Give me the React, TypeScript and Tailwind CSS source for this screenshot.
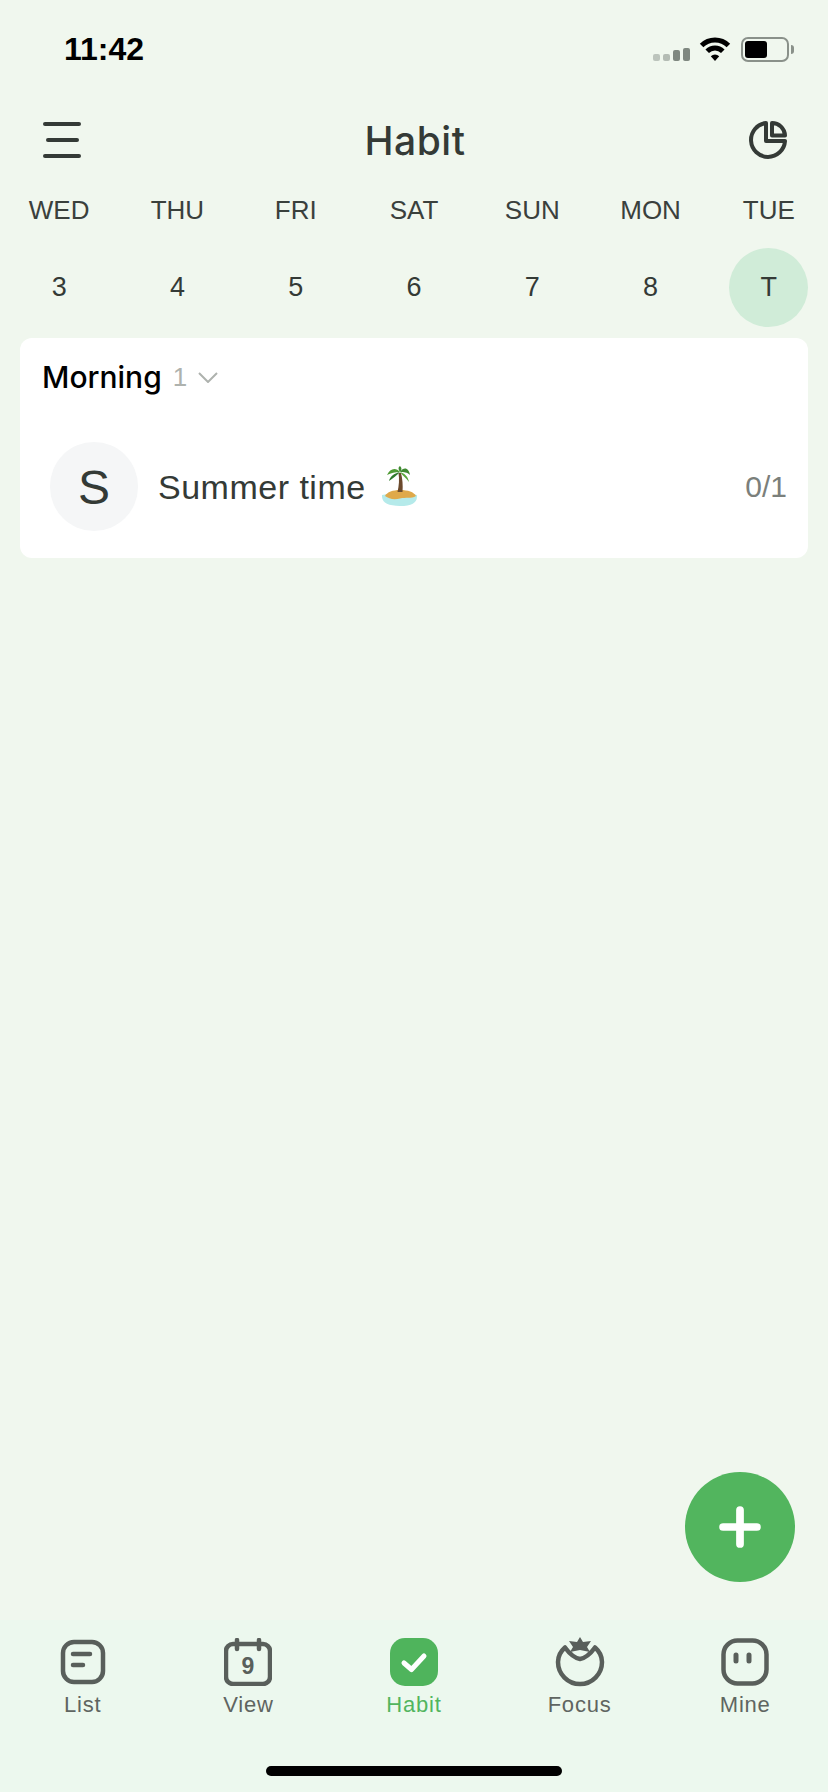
import { Plus } from "lucide-react";

const days = [
  { name: "WED", num: "3" },
  { name: "THU", num: "4" },
  { name: "FRI", num: "5" },
  { name: "SAT", num: "6" },
  { name: "SUN", num: "7" },
  { name: "MON", num: "8" },
  { name: "TUE", num: "T", today: true }
];

function StatusIcons() {
  return <div className="flex items-center">
      <div className="flex items-end gap-[3px] w-[37px] mt-[8px]">
        <span className="w-[7px] h-[7px] rounded-[2px] bg-[#bcc4bc]" />
        <span className="w-[7px] h-[7px] rounded-[2px] bg-[#b4bcb4]" />
        <span className="w-[7px] h-[11px] rounded-[2px] bg-[#7f8880]" />
        <span className="w-[7px] h-[13px] rounded-[2px] bg-[#7f8880]" />
      </div>
      <svg width="32" height="24" viewBox="0 0 32 24" fill="none" className="ml-[9px] mb-[2px]">
        <path d="M2.600 8.600 A19 19 0 0 1 29.400 8.600" stroke="#000" strokeWidth="5" />
        <path d="M8.200 14.200 A11 11 0 0 1 23.800 14.200" stroke="#000" strokeWidth="5" />
        <path d="M11.800 19.300 L16 24 L20.200 19.300 A6 6 0 0 0 11.800 19.300 Z" fill="#000" />
      </svg>
      <div className="ml-[10px] mb-[1px] flex items-center">
        <div className="w-[48px] h-[25px] rounded-[7px] border-2 border-[#8a918a] p-[2px]">
          <div className="w-[22px] h-full rounded-[3px] bg-black" />
        </div>
        <span className="ml-[2px] w-[3px] h-[9px] rounded-r-full bg-[#8a918a]" />
      </div>
    </div>;
}

function PalmIsland() {
  return <svg width="36" height="40" viewBox="0 0 36 40" className="shrink-0">
      <path d="M0 29 Q18 25 35 29 Q36 40 18 40 Q-1 40 0 29 Z" fill="#b5eaea" />
      <path d="M3 30 C5 26 11 24 18 24 C26 24 32 26 34 30 C29 33 24 31 18 32.500 C12 34 7 33 3 30 Z" fill="#dfa94a" />
      <path d="M16.500 7 C17.500 13 17 20 15.500 26 L20.500 26 C21 19 20.500 13 19 7 Z" fill="#6b4a2c" />
      <path d="M18 6 C14 1 8 2 5 9 C9 7 13 6 18 6 Z" fill="#4f9a34" />
      <path d="M18 6 C22 0 27 2 28 9 C25 6 22 6 18 6 Z" fill="#3f8a30" />
      <path d="M18 6 C13 7 8 10 7 15 C11 12 14 10 18 6 Z" fill="#2f7a2c" />
      <path d="M18 6 C22 7 26 10 27 16 C24 12 21 10 18 6 Z" fill="#5aa83c" />
      <path d="M18 6 C16 3 16 1 18 0 C20 2 20 4 18 6 Z" fill="#3f8a30" />
    </svg>;
}

function ListIcon() {
  return <svg width="48" height="48" viewBox="0 0 48 48" fill="none" stroke="#595f5b">
      <rect x="4" y="4" width="40" height="40" rx="11" strokeWidth="4.5" />
      <path d="M14 16 H31 M14 27 H24" strokeWidth="4.5" strokeLinecap="round" />
    </svg>;
}

function ViewIcon() {
  return <svg width="48" height="48" viewBox="0 0 48 48" fill="none" stroke="#595f5b">
      <rect x="2" y="6" width="44" height="40" rx="7" strokeWidth="4.5" />
      <path d="M13 2 V11 M35 2 V11" strokeWidth="4.5" strokeLinecap="round" />
      <text x="24" y="36" textAnchor="middle" fontSize="23" fontWeight="700" fontFamily="Liberation Sans, sans-serif" fill="#595f5b" stroke="none">9</text>
    </svg>;
}

function HabitIcon() {
  return <div className="w-[48px] h-[48px] rounded-[15px] bg-[#4fb45c] flex items-center justify-center">
      <svg width="48" height="48" viewBox="0 0 48 48" fill="none">
        <path d="M14 25 L21.500 31.500 L34 18" stroke="#fff" strokeWidth="5" strokeLinecap="round" strokeLinejoin="round" />
      </svg>
    </div>;
}

function FocusIcon() {
  return <svg width="48" height="48" viewBox="0 0 48 48" fill="none" className="overflow-visible">
      <path d="M9 9.500 C13 15 18 20 24 21 C30 20 35 15 39 9.500 C43 13 46 18 46 24 A22 22 0 0 1 2 24 C2 18 5 13 9 9.500 Z" stroke="#595f5b" strokeWidth="4.5" strokeLinejoin="round" />
      <path d="M24 -1 L27 4 L35 3 L31 9 L34 14 L24 12 L14 14 L17 9 L13 3 L21 4 Z" fill="#595f5b" />
    </svg>;
}

function MineIcon() {
  return <svg width="48" height="48" viewBox="0 0 48 48" fill="none" stroke="#595f5b">
      <rect x="2.500" y="2.500" width="43" height="43" rx="14" strokeWidth="4.5" />
      <path d="M15 17 V23 M28 17 V23" strokeWidth="5" strokeLinecap="round" />
    </svg>;
}

const tabs = [
  { label: "List", icon: <ListIcon /> },
  { label: "View", icon: <ViewIcon /> },
  { label: "Habit", icon: <HabitIcon />, active: true },
  { label: "Focus", icon: <FocusIcon /> },
  { label: "Mine", icon: <MineIcon /> }
];

export default function App() {
  return <div className="relative w-[828px] h-[1792px] flex flex-col overflow-hidden bg-[#f0f7ee] font-['Liberation_Sans',sans-serif]">
      <div className="h-[100px] flex items-center justify-between pl-[64px] pr-[34px]">
        <span className="text-[32px] leading-none font-bold text-black mb-[2px]">11:42</span>
        <StatusIcons />
      </div>

      <div className="h-[80px] flex items-center justify-between pl-[43px] pr-[41px]">
        <div className="w-[38px] h-[36px] flex flex-col justify-between items-center">
          <span className="h-[4px] w-[38px] rounded-full bg-[#343a36]" />
          <span className="h-[4px] w-[33px] rounded-full bg-[#343a36]" />
          <span className="h-[4px] w-[38px] rounded-full bg-[#343a36]" />
        </div>
        <span className="text-[39px] leading-none font-medium tracking-[0.5px] text-[#343a36] font-['Inter',sans-serif]">Habit</span>
        <svg width="38" height="38" viewBox="0 0 38 38" fill="none" stroke="#343a36" strokeWidth="4" strokeLinejoin="round">
          <path d="M17 2 A17 17 0 1 0 36 20 H17 Z" />
          <path d="M23 2 A13 13 0 0 1 36 14.500 H23 Z" />
        </svg>
      </div>

      <div className="grid grid-cols-7 h-[60px] items-center text-center text-[26px] leading-none text-[#3a403c]">
        {days.map(d => <span key={d.name}>{d.name}</span>)}
      </div>

      <div className="grid grid-cols-7 mt-[8px] text-[27px] leading-none text-[#343a36]">
        {days.map(d => <div key={d.name} className="flex justify-center">
            <span className={d.today ? "w-[79px] h-[79px] rounded-full bg-[#d0ecd8] flex items-center justify-center" : "w-[79px] h-[79px] rounded-full flex items-center justify-center"}>
              {d.num}
            </span>
          </div>)}
      </div>

      <div className="mx-[20px] mt-[11px] h-[220px] rounded-[12px] bg-white">
        <div className="flex items-center pl-[22px] pt-[24px] leading-none">
          <span className="text-[30px] font-medium text-black font-['Inter',sans-serif]">Morning</span>
          <span className="ml-[11px] text-[26px] text-[#aeb2ae]">1</span>
          <svg width="20" height="11" viewBox="0 0 20 11" fill="none" stroke="#aeb2ae" strokeWidth="2" className="ml-[11px]">
            <path d="M1 1 L10 10 L19 1" />
          </svg>
        </div>
        <div className="flex items-center pl-[30px] pr-[21px] mt-[50px]">
          <div className="w-[88px] h-[89px] pt-[2px] rounded-full bg-[#f5f6f7] flex items-center justify-center text-[48px] leading-none text-[#343a36]">S</div>
          <span className="ml-[20px] text-[34px] leading-none tracking-[0.5px] text-[#343a36]">Summer time</span>
          <span className="ml-[16px] mt-[-2px]"><PalmIsland /></span>
          <span className="ml-auto text-[30px] leading-none text-[#7b7f7b]">0/1</span>
        </div>
      </div>

      <div className="flex-1" />

      <button className="absolute left-[685px] top-[1472px] w-[110px] h-[110px] rounded-full bg-[#52b55e] flex items-center justify-center">
        <Plus size={58} color="#fff" strokeWidth={3.2} />
      </button>

      <div className="h-[172px] bg-[#ecf8ee]">
        <div className="grid grid-cols-5 pt-[18px]">
          {tabs.map(t => <div key={t.label} className="flex flex-col items-center">
              {t.icon}
              <span className={t.active ? "mt-[6px] text-[22px] leading-[26px] tracking-[0.8px] text-[#52b55e]" : "mt-[6px] text-[22px] leading-[26px] tracking-[0.8px] text-[#5f6561]"}>{t.label}</span>
            </div>)}
        </div>
        <div className="mt-[48px] mx-auto w-[296px] h-[10px] rounded-full bg-black" />
      </div>
    </div>;
}
